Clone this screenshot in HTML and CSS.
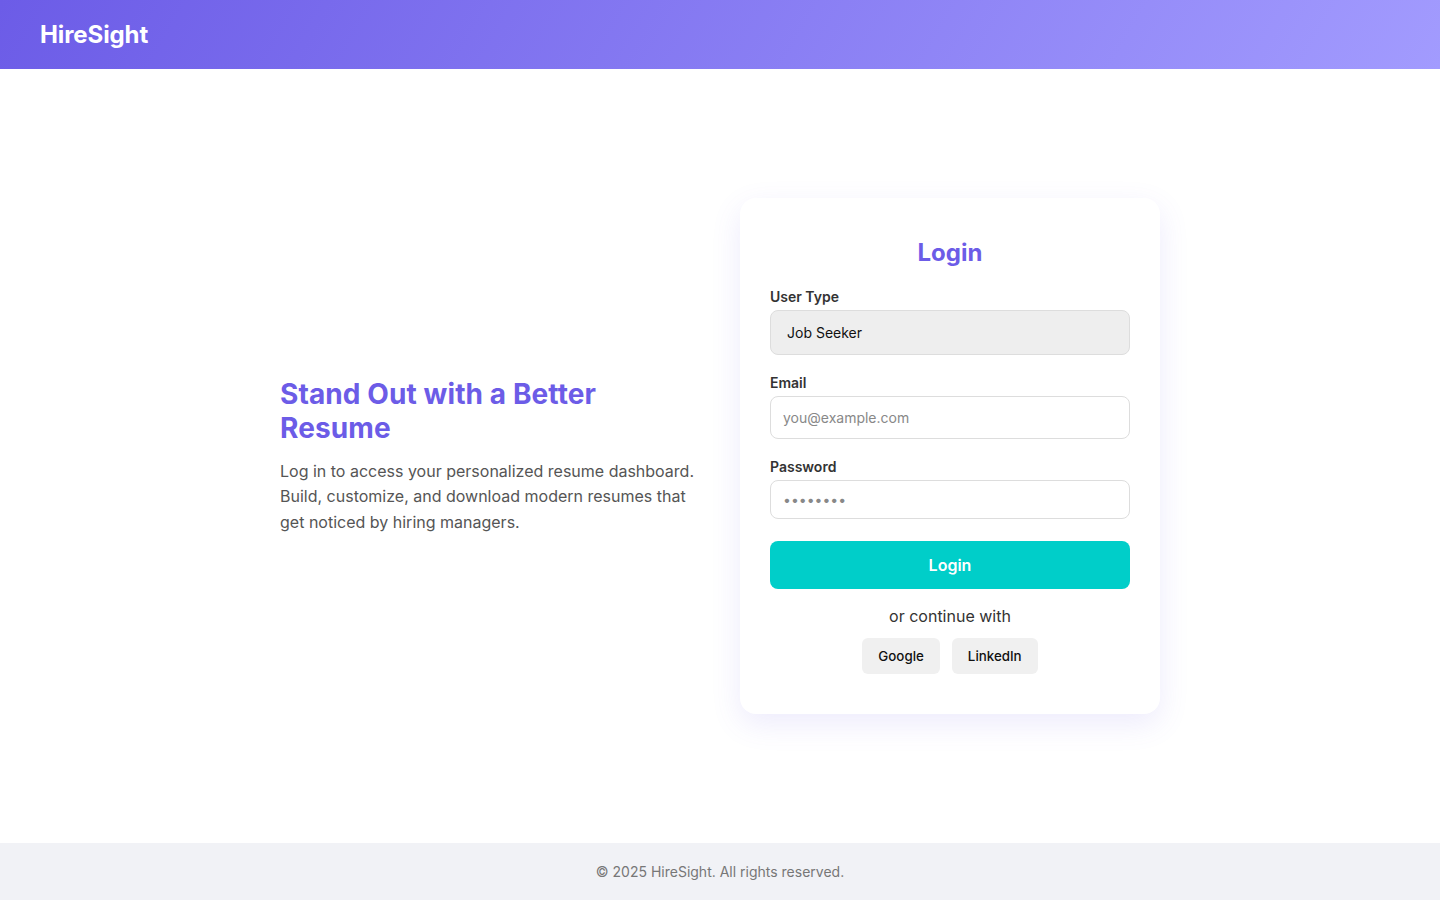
FILE: index.html
```html
<!DOCTYPE html>
<html lang="en">
<head>
<meta charset="utf-8">
<title>HireSight – Login</title>
<link rel="stylesheet" href="styles.css">
</head>
<body>
<header class="topbar">
  <div class="logo">HireSight</div>
</header>
<main class="main">
  <div class="wrap">
    <section class="intro">
      <h1 class="intro-title">Stand Out with a Better Resume</h1>
      <p class="intro-text">Log in to access your personalized resume dashboard. Build, customize, and download modern resumes that get noticed by hiring managers.</p>
    </section>
    <section class="card">
      <h2 class="card-title">Login</h2>
      <div class="field">
        <label class="label" for="utype">User Type</label>
        <div class="select" id="utype">Job Seeker</div>
      </div>
      <div class="field">
        <label class="label" for="email">Email</label>
        <input class="input input-email" id="email" type="email" placeholder="you@example.com">
      </div>
      <div class="field field-last">
        <label class="label" for="pw">Password</label>
        <input class="input input-pw" id="pw" type="password" placeholder="••••••••">
      </div>
      <button class="btn-login" type="button">Login</button>
      <p class="alt">or continue with</p>
      <div class="socials">
        <button class="btn-social" type="button">Google</button>
        <button class="btn-social" type="button">LinkedIn</button>
      </div>
    </section>
  </div>
</main>
<footer class="footer">© 2025 HireSight. All rights reserved.</footer>
</body>
</html>
```

FILE: styles.css
```css
* { box-sizing: border-box; }
html, body { height: 100%; }
body {
  margin: 0;
  font-family: Inter, "Noto Sans", Arial, sans-serif;
  color: #333;
  background: #fff;
  display: flex;
  flex-direction: column;
  min-height: 100vh;
}
.topbar {
  height: 69px;
  padding: 0 40px;
  display: flex;
  align-items: center;
  background: linear-gradient(120deg, #6c5ce7 0%, #a29bfe 100%);
}
.logo {
  color: #fff;
  font-size: 24px;
  font-weight: 700;
  letter-spacing: -0.1px;
}
.main {
  flex: 1;
  display: flex;
  align-items: center;
  justify-content: center;
}
.wrap {
  display: flex;
  align-items: center;
  gap: 40px;
}
.intro { width: 420px; }
.intro-title {
  margin: 0 0 14px;
  font-size: 28px;
  line-height: 34px;
  font-weight: 700;
  color: #6c5ce7;
  letter-spacing: 0.1px;
}
.intro-text {
  margin: 0;
  font-size: 16px;
  line-height: 25.6px;
  color: #555;
}
.card {
  width: 420px;
  background: #fff;
  border-radius: 16px;
  padding: 40px 30px 40px;
  box-shadow: 0 10px 30px rgba(108, 92, 231, 0.12);
}
.card-title {
  margin: 0 0 21px;
  text-align: center;
  font-size: 24px;
  line-height: 29px;
  font-weight: 700;
  color: #6c5ce7;
}
.field { margin-bottom: 19px; }
.field-last { margin-bottom: 22px; }
.label {
  display: block;
  font-size: 14px;
  line-height: 17px;
  font-weight: 600;
  color: #333;
  margin-bottom: 5px;
}
.select {
  height: 45px;
  border: 1px solid #ddd;
  border-radius: 8px;
  background: #eee;
  padding: 0 16px;
  display: flex;
  align-items: center;
  font-size: 14px;
  color: #111;
}
.input {
  display: block;
  width: 100%;
  border: 1px solid #ddd;
  border-radius: 8px;
  background: #fff;
  padding: 0 12px;
  font-family: inherit;
  font-size: 14px;
  color: #333;
  outline: none;
}
.input::placeholder { color: #888; }
.input-email { height: 43px; }
.input-pw { height: 39px; }
.btn-login {
  display: block;
  width: 100%;
  height: 48px;
  border: 0;
  border-radius: 8px;
  background: #00cec9;
  color: #fff;
  font-family: inherit;
  font-size: 16px;
  font-weight: 600;
}
.alt {
  margin: 17px 0 12px;
  text-align: center;
  font-size: 16px;
  line-height: 20px;
  color: #333;
}
.socials {
  display: flex;
  justify-content: center;
  gap: 12px;
}
.btn-social {
  height: 36px;
  padding: 0 16px;
  border: 0;
  border-radius: 6px;
  background: #f0f0f0;
  color: #111;
  font-family: inherit;
  font-size: 13.333px;
  font-weight: 500;
}
.footer {
  height: 57px;
  display: flex;
  align-items: center;
  justify-content: center;
  background: #f1f2f6;
  color: #777;
  font-size: 14px;
}
```
